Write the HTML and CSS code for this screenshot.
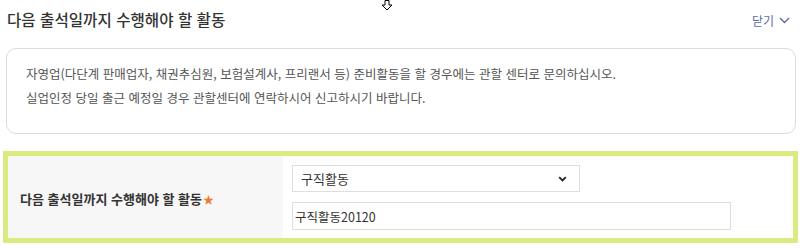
FILE: index.html
```html
<!DOCTYPE html>
<html lang="ko">
<head>
<meta charset="utf-8">
<link rel="stylesheet" href="styles.css">
</head>
<body>
<div class="page">
  <div class="head">
    <h2 class="title">다음 출석일까지 수행해야 할 활동</h2>
    <a class="toggle">닫기 <svg width="11" height="7" viewBox="0 0 11 7"><path d="M1 1l4.5 4.5L10 1" fill="none" stroke="#5b6aa8" stroke-width="1.4"/></svg></a>
  </div>
  <div class="notice">
    <p>자영업(다단계 판매업자, 채권추심원, 보험설계사, 프리랜서 등) 준비활동을 할 경우에는 관할 센터로 문의하십시오.</p>
    <p>실업인정 당일 출근 예정일 경우 관할센터에 연락하시어 신고하시기 바랍니다.</p>
  </div>
  <div class="formbox">
    <div class="label">다음 출석일까지 수행해야 할 활동<span class="star">★</span></div>
    <div class="fields">
      <div class="select"><span>구직활동</span><svg width="9" height="6" viewBox="0 0 9 6"><path d="M1.2 1.2l3.3 3.3 3.3-3.3" fill="none" stroke="#222" stroke-width="1.8"/></svg></div>
      <div class="input">구직활동20120</div>
    </div>
  </div>
  <svg class="cursor" width="12" height="11" viewBox="0 0 12 11"><path d="M4 0.5h4v4.5h3L6 10 1 5h3z" fill="#fff" stroke="#000" stroke-width="1"/></svg>
</div>
</body>
</html>
```
FILE: styles.css
```css
html, body { margin: 0; padding: 0; background: #fff; }
body { font-family: "Noto Sans CJK KR", "Noto Sans", sans-serif; color: #333; }
.page { position: relative; width: 800px; height: 248px; overflow: hidden; }
.head { display: flex; justify-content: space-between; align-items: center; height: 38px; padding: 0 10px 0 7px; }
.title { margin: 0; font-size: 15.6px; font-weight: 500; color: #333; }
.toggle { display: flex; align-items: center; gap: 5px; font-size: 12px; color: #5b6aa8; margin-top: 3px; }
.notice { margin: 10px 4px 0 6px; height: 86px; border: 1px solid #dcdcdc; border-radius: 10px; padding: 13px 0 0 19px; box-sizing: border-box; }
.notice p { margin: 0; font-size: 12.5px; line-height: 24px; color: #555; }
.formbox { display: flex; margin: 17px 2px 0 3px; height: 92px; border: 5px solid #d8ec80; box-sizing: border-box; }
.label { width: 275px; background: #f7f7f7; display: flex; align-items: center; padding-left: 12px; box-sizing: border-box; font-size: 13px; font-weight: 700; color: #333; padding-top: 3px; }
.star { color: #f07a2a; font-size: 11px; margin-left: 1px; }
.fields { display: flex; flex-direction: column; gap: 10px; padding: 9px 0 0 9px; }
.select { width: 288px; height: 27px; border: 1px solid #dedede; box-sizing: border-box; display: flex; align-items: center; justify-content: space-between; padding: 0 12px 0 8px; font-size: 13px; color: #333; }
.input { width: 439px; height: 28px; border: 1px solid #dedede; box-sizing: border-box; display: flex; align-items: center; padding-left: 2px; font-size: 12.5px; color: #333; }
.cursor { position: absolute; left: 381px; top: 0; }
```
